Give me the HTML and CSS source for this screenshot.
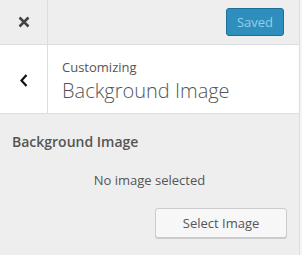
FILE: index.html
```html
<!DOCTYPE html>
<html lang="en">
<head>
    <meta charset="UTF-8">
    <title>Customizing - Background Image</title>
    <link rel="stylesheet" href="styles.css">
</head>
<body>
    <div class="customizer">
        <div class="top-bar">
            <a href="#" class="close-btn" aria-label="Close">
                <svg width="12" height="12" viewBox="0 0 12 12">
                    <path d="M1.5 1.5 L10.5 10.5 M10.5 1.5 L1.5 10.5" stroke="#444" stroke-width="2.6" fill="none"/>
                </svg>
            </a>
            <div class="top-actions">
                <button class="save-btn" disabled>Saved</button>
            </div>
        </div>

        <div class="section-head">
            <a href="#" class="back-btn" aria-label="Back">
                <svg width="8" height="13" viewBox="0 0 8 13">
                    <path d="M6.5 1 L1.5 6.5 L6.5 12" stroke="#111" stroke-width="2.2" fill="none"/>
                </svg>
            </a>
            <div class="section-title">
                <span class="crumb">Customizing</span>
                <h2>Background Image</h2>
            </div>
        </div>

        <div class="control">
            <h3 class="control-label">Background Image</h3>
            <div class="placeholder">No image selected</div>
            <div class="actions">
                <button class="select-btn">Select Image</button>
            </div>
        </div>
    </div>
</body>
</html>
```

FILE: styles.css
```css
body {
    margin: 0;
    font-family: "Open Sans", "Noto Sans", sans-serif;
    background: #f5f5f5;
}

.customizer {
    width: 299px;
    height: 255px;
    background: #eee;
    border-right: 1px solid #ddd;
}

.top-bar {
    display: flex;
    height: 44px;
    border-bottom: 1px solid #ddd;
}

.close-btn,
.back-btn {
    width: 47px;
    border-right: 1px solid #ddd;
    display: flex;
    align-items: center;
    justify-content: center;
}

.top-actions {
    flex: 1;
    display: flex;
    align-items: center;
    justify-content: flex-end;
    padding-right: 15px;
}

.save-btn {
    font-family: inherit;
    font-size: 13px;
    height: 28px;
    width: 58px;
    padding: 0;
    background: #2e8fbe;
    border: 1px solid #1d6f99;
    border-radius: 3px;
    color: #94cfea;
}

.section-head {
    display: flex;
    height: 68px;
    background: #fff;
    border-bottom: 1px solid #ddd;
}

.back-btn svg {
    margin-top: 2px;
}

.section-title {
    padding: 13px 0 0 14px;
    color: #555;
}

.crumb {
    display: block;
    font-size: 13px;
    line-height: 18px;
}

.section-title h2 {
    margin: 0;
    font-size: 20px;
    font-weight: 300;
    line-height: 29px;
}

.control {
    padding: 18px 12px 0;
}

.control-label {
    margin: 0;
    font-size: 14px;
    font-weight: 600;
    color: #555;
    line-height: 20px;
}

.placeholder {
    margin-top: 18px;
    text-align: center;
    font-size: 13px;
    color: #555;
    line-height: 20px;
}

.actions {
    display: flex;
    justify-content: flex-end;
    margin-top: 18px;
}

.select-btn {
    font-family: inherit;
    font-size: 13px;
    color: #555;
    width: 132px;
    height: 30px;
    background: #f7f7f7;
    border: 1px solid #ccc;
    border-radius: 3px;
    box-shadow: 0 1px 0 #ccc;
}
```
